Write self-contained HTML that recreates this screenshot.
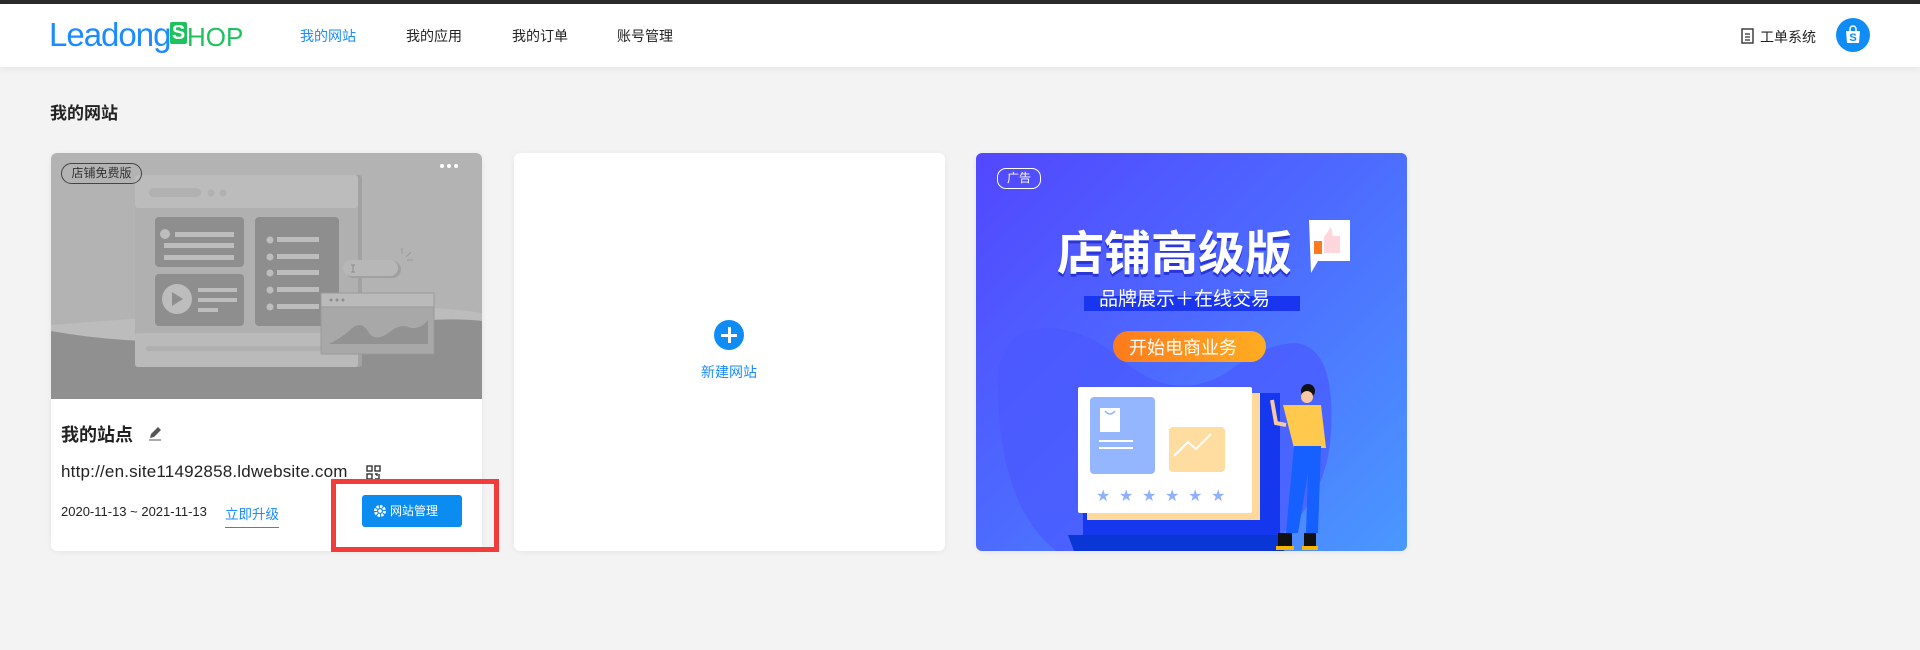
<!DOCTYPE html>
<html><head><meta charset="utf-8"><style>
*{margin:0;padding:0;box-sizing:border-box}
body{width:1920px;height:650px;background:#f3f3f3;font-family:"Liberation Sans","Noto Sans CJK SC",sans-serif;position:relative;overflow:hidden;color:#222}
.top{position:absolute;left:0;top:0;width:1920px;height:4px;background:#2b2b2b}
.hdr{position:absolute;left:0;top:4px;width:1920px;height:63px;background:#fff;box-shadow:0 2px 6px rgba(0,0,0,.06)}
.a{position:absolute;white-space:nowrap}
.nav{font-size:14px;top:22px;color:#222}
.card{position:absolute;top:153px;width:431px;height:398px;background:#fff;border-radius:6px;overflow:hidden;box-shadow:0 1px 6px rgba(0,0,0,.06)}
</style></head><body>
<div class="top"></div>
<div class="hdr">
 <div class="a" style="left:49px;top:12px;font-size:33px;color:#1a8cff;letter-spacing:-1px;font-family:'Liberation Sans',sans-serif">Leadong</div>
 <div class="a" style="left:170px;top:18px;width:17px;height:22px;background:#1cc35c;border-radius:2px;color:#fff;font-size:20px;line-height:22px;text-align:center;font-weight:bold">S</div>
 <div class="a" style="left:187px;top:18px;font-size:26px;color:#1cc35c">HOP</div>
 <div class="a nav" style="left:300px;color:#1a8cff">我的网站</div>
 <div class="a nav" style="left:406px">我的应用</div>
 <div class="a nav" style="left:512px">我的订单</div>
 <div class="a nav" style="left:617px">账号管理</div>
 <svg class="a" style="left:1741px;top:24px" width="13" height="16" viewBox="0 0 13 16"><rect x="1" y="1" width="11" height="14" fill="none" stroke="#333" stroke-width="1.4"/><path d="M4 6h5M4 9h5M4 12h5" stroke="#333" stroke-width="1.2"/></svg>
 <div class="a" style="left:1760px;top:23px;font-size:14px;color:#222">工单系统</div>
 <div class="a" style="left:1836px;top:14px;width:34px;height:34px;border-radius:50%;background:#0f8df5"></div>
 <svg class="a" style="left:1843px;top:21px" width="20" height="20" viewBox="0 0 20 20"><path d="M3 6h14l-1 12H4z" fill="#fff"/><path d="M7 6V4a3 3 0 0 1 6 0v2" stroke="#fff" stroke-width="1.5" fill="none"/><text x="10" y="16" font-size="11" font-weight="bold" fill="#0f8df5" text-anchor="middle" font-family="Liberation Sans">S</text></svg>
</div>
<div class="a" style="left:50px;top:99px;font-size:17px;font-weight:bold;color:#222">我的网站</div>

<div class="card" style="left:51px">
 <svg width="431" height="246" viewBox="0 0 431 246" style="display:block">
  <rect width="431" height="246" fill="#b3b3b3"/>
  <path d="M0 172 Q150 160 300 155 Q380 152 431 160 V246 H0Z" fill="#bcbcbc"/>
  <path d="M0 178 Q120 200 300 178 Q380 162 431 168 V246 H0Z" fill="#909090"/>
  <rect x="87" y="22" width="224" height="192" rx="3" fill="#a2a2a2"/>
  <rect x="84" y="22" width="223" height="192" rx="3" fill="#b0b0b0"/>
  <rect x="84" y="22" width="223" height="33" rx="3" fill="#bcbcbc"/>
  <rect x="98" y="35" width="52" height="9" rx="4.5" fill="#b1b1b1"/>
  <circle cx="160" cy="40" r="3.5" fill="#b1b1b1"/><circle cx="172" cy="40" r="3.5" fill="#b1b1b1"/>
  <rect x="84" y="180" width="223" height="34" rx="3" fill="#bababa"/>
  <rect x="95" y="193" width="200" height="5" rx="2.5" fill="#b0b0b0"/>
  <rect x="104" y="64" width="89" height="50" rx="4" fill="#8e8e8e"/>
  <rect x="104" y="121" width="89" height="52" rx="4" fill="#8e8e8e"/>
  <rect x="204" y="64" width="84" height="109" rx="4" fill="#8e8e8e"/>
  <g fill="#bdbdbd">
   <circle cx="114" cy="81" r="5"/><rect x="124" y="79" width="59" height="5"/><rect x="113" y="90" width="70" height="5"/><rect x="113" y="102" width="70" height="5"/>
   <circle cx="126" cy="146" r="15"/><rect x="147" y="135" width="39" height="4"/><rect x="147" y="145" width="39" height="4"/><rect x="147" y="155" width="20" height="4"/>
   <circle cx="219" cy="87" r="3.5"/><rect x="226" y="84" width="42" height="5"/>
   <circle cx="219" cy="104" r="3.5"/><rect x="226" y="101" width="42" height="5"/>
   <circle cx="219" cy="120" r="3.5"/><rect x="226" y="117" width="42" height="5"/>
   <circle cx="219" cy="137" r="3.5"/><rect x="226" y="134" width="42" height="5"/>
   <circle cx="219" cy="154" r="3.5"/><rect x="226" y="151" width="42" height="5"/>
  </g>
  <path d="M121 139v14l11-7z" fill="#8e8e8e"/>
  <rect x="294" y="108" width="56" height="17" rx="8.5" fill="#a0a0a0"/>
  <rect x="292" y="107" width="55" height="16" rx="8" fill="#b7b7b7"/>
  <path d="M302 112v7M300 112h4M300 119h4" stroke="#8e8e8e" stroke-width="1"/>
  <path d="M351 95v6M355 104l5-5M356 107h6" stroke="#9a9a9a" stroke-width="1"/>
  <rect x="270" y="140" width="113" height="61" fill="#a8a8a8" stroke="#9a9a9a"/>
  <rect x="270" y="140" width="113" height="14" fill="#bababa" stroke="#9a9a9a"/>
  <circle cx="280" cy="147" r="1.5" fill="#8e8e8e"/><circle cx="286" cy="147" r="1.5" fill="#8e8e8e"/><circle cx="292" cy="147" r="1.5" fill="#8e8e8e"/>
  <path d="M278 191 Q290 185 298 178 Q310 165 318 180 Q325 190 340 178 Q350 170 360 175 Q370 176 377 167 V191Z" fill="#929292"/>
  <circle cx="391" cy="13" r="2" fill="#fff"/><circle cx="398" cy="13" r="2" fill="#fff"/><circle cx="405" cy="13" r="2" fill="#fff"/>
 </svg>
 <div class="a" style="left:10px;top:10px;width:81px;height:21px;border:1px solid #444;border-radius:11px;font-size:12px;line-height:19px;text-align:center;color:#333">店铺免费版</div>
 <div class="a" style="left:10px;top:268px;font-size:18px;font-weight:bold;color:#222">我的站点</div>
 <svg class="a" style="left:96px;top:272px" width="16" height="16" viewBox="0 0 16 16"><path d="M3 13l1-4 7-7 3 3-7 7z" fill="#555"/><path d="M2 15h12" stroke="#555" stroke-width="1"/></svg>
 <div class="a" style="left:10px;top:309px;font-size:17px;color:#222;letter-spacing:0.2px">http://en.site11492858.ldwebsite.com</div>
 <svg class="a" style="left:315px;top:312px" width="15" height="15" viewBox="0 0 15 15" fill="none" stroke="#333" stroke-width="1.4"><rect x="1" y="1" width="5" height="5"/><rect x="9" y="1" width="5" height="5"/><rect x="1" y="9" width="5" height="5"/><path d="M9 9h2v2M13 9v5h-4"/></svg>
 <div class="a" style="left:10px;top:351px;font-size:13px;color:#222">2020-11-13 ~ 2021-11-13</div>
 <div class="a" style="left:174px;top:350px;font-size:13.5px;color:#1a8cff;border-bottom:1.5px solid #1a8cff;padding-bottom:4px">立即升级</div>
 <div class="a" style="left:311px;top:342px;width:100px;height:32px;background:#0a8cf0;border-radius:3px;color:#fff;font-size:12px;line-height:32px;padding-left:28px">网站管理</div>
 <svg class="a" style="left:322px;top:351px" width="14" height="14" viewBox="0 0 14 14"><circle cx="7" cy="7" r="4.5" fill="none" stroke="#fff" stroke-width="3" stroke-dasharray="2.4 1.1"/><circle cx="7" cy="7" r="1.8" fill="#fff"/></svg>
</div>
<div class="a" style="left:331px;top:479px;width:168px;height:73px;border:5px solid #f23b3b"></div>

<div class="card" style="left:514px">
 <div class="a" style="left:200px;top:167px;width:30px;height:30px;border-radius:50%;background:#0f8df5"></div>
 <div class="a" style="left:207px;top:180.5px;width:16px;height:3px;background:#fff"></div>
 <div class="a" style="left:213.5px;top:174px;width:3px;height:16px;background:#fff"></div>
 <div class="a" style="left:187px;top:209px;font-size:14px;color:#1a8cff">新建网站</div>
</div>

<div class="card" style="left:976px;background:linear-gradient(135deg,#5247ff 0%,#4d68ff 45%,#4a98ff 100%)">
 <svg width="431" height="398" viewBox="0 0 431 398" style="position:absolute;left:0;top:0">
  <path d="M22 220 Q30 175 70 175 Q110 175 150 210 Q200 250 250 220 Q290 190 320 190 Q360 195 355 280 Q350 360 280 398 H80 Q20 350 22 220Z" fill="#4a58ff" opacity=".7"/>
  <rect x="107" y="240" width="197" height="142" fill="#1538ee"/>
  <path d="M92 382 H314 L308 398 H98Z" fill="#0a36d6"/>
  <rect x="111" y="240" width="173" height="127" fill="#ffd99a"/>
  <rect x="102" y="234" width="174" height="126" rx="2" fill="#fff"/>
  <rect x="114" y="244" width="65" height="77" rx="4" fill="#94b6ff"/>
  <path d="M124 255h20v24h-20z" fill="#fff"/><path d="M129 258q5 6 10 0" stroke="#94b6ff" stroke-width="1.5" fill="none"/>
  <rect x="123" y="287" width="34" height="2" fill="#fff"/><rect x="123" y="294" width="34" height="2" fill="#fff"/>
  <rect x="193" y="274" width="56" height="45" rx="4" fill="#ffdca0"/>
  <path d="M198 303 L212 289 L220 296 L235 281" stroke="#fff" stroke-width="2" fill="none"/>
  <g fill="#8fb0ff" font-size="16" font-family="DejaVu Sans">
   <text x="120" y="348">★</text><text x="143" y="348">★</text><text x="166" y="348">★</text><text x="189" y="348">★</text><text x="212" y="348">★</text><text x="235" y="348">★</text>
  </g>
  <circle cx="332" cy="238" r="7" fill="#111"/>
  <circle cx="331" cy="244" r="6" fill="#f9c7a2"/>
  <path d="M307 252 H345 L350 295 H318Z" fill="#ffc94d"/>
  <path d="M296 247 L300 270 L310 272" stroke="#f9c7a2" stroke-width="4" fill="none"/>
  <path d="M318 293 H345 L342 380 H330 L332 320 L322 380 H310Z" fill="#1560ff"/>
  <rect x="302" y="380" width="14" height="14" fill="#111"/><rect x="328" y="380" width="12" height="14" fill="#111"/>
  <rect x="300" y="393" width="18" height="4" fill="#f7b500"/><rect x="326" y="393" width="16" height="4" fill="#f7b500"/>
  <rect x="108" y="143" width="216" height="15" fill="#1a35ef"/>
  <path d="M333 67 H374 V108 H342 L335 120Z" fill="#fff"/>
  <rect x="338" y="88" width="8" height="13" fill="#ff7a1f"/>
  <path d="M348 100 V84 L355 74 L357 83 H364 V100Z" fill="#ffd6dc"/>
  <defs><linearGradient id="og" x1="0" x2="1"><stop offset="0" stop-color="#ff7a1c"/><stop offset="1" stop-color="#ffad22"/></linearGradient></defs>
  <rect x="137" y="178" width="153" height="31" rx="15.5" fill="url(#og)"/>
 </svg>
 <div class="a" style="left:21px;top:15px;width:44px;height:21px;border:1px solid #fff;border-radius:9px;color:#fff;font-size:12px;line-height:19px;text-align:center">广告</div>
 <div class="a" style="left:81px;top:62px;font-size:47px;font-weight:bold;color:#fff;text-shadow:0 3px 0 #2a36d8">店铺高级版</div>
 <div class="a" style="left:123px;top:131px;font-size:19px;color:#fff">品牌展示＋在线交易</div>
 <div class="a" style="left:153px;top:181px;font-size:18px;color:#fff">开始电商业务</div>
</div>
</body></html>
